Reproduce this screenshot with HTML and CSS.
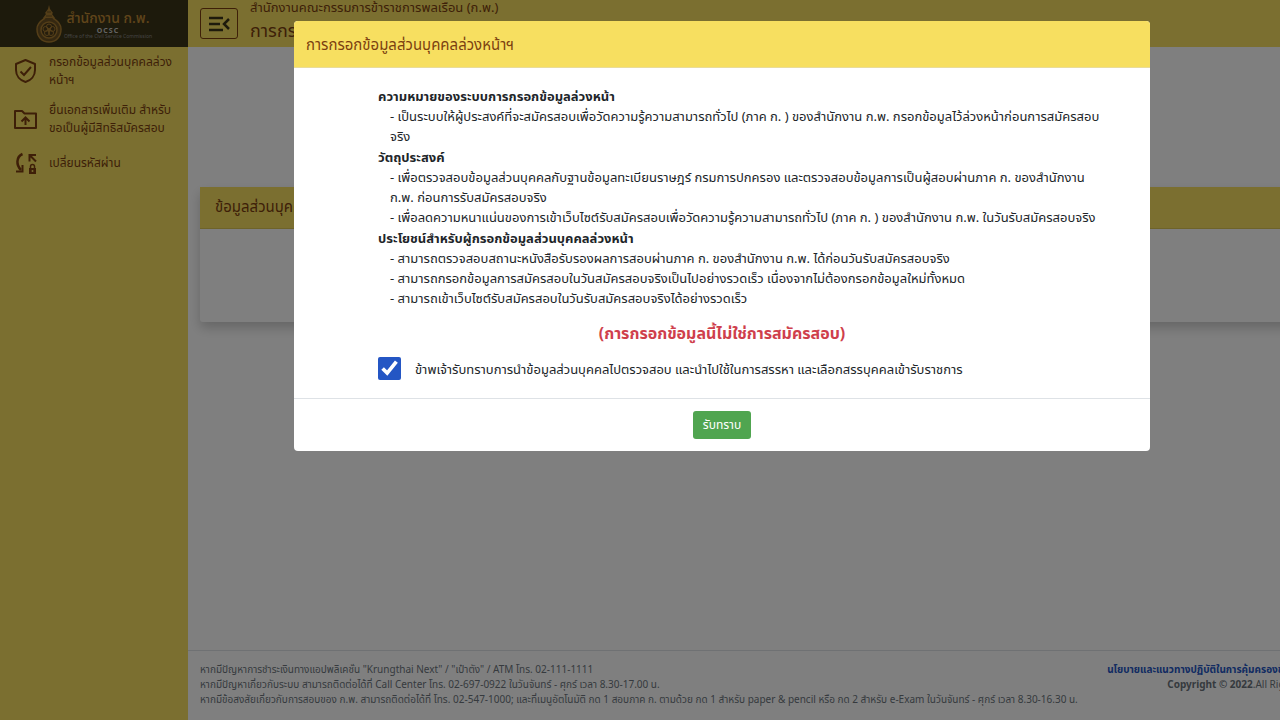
FILE: index.html
```html
<!DOCTYPE html>
<html lang="th">
<head>
    <meta charset="UTF-8">
    <meta name="viewport" content="width=device-width, initial-scale=1.0">
    <title>สำนักงาน ก.พ.</title>
    <link rel="stylesheet" href="styles.css">
</head>
<body>

<div class="page">
    <aside class="sidebar">
        <div class="brand">
            <svg class="brand-logo" width="26" height="38" viewBox="0 0 26 38" fill="none" stroke="#a87c30">
                <path d="M13 0l1 4 3 4-1 1 3 4-2 3H9l-2-3 3-4-1-1 3-4z" fill="#a87c30" stroke="none"/>
                <path d="M11 7h4M10 11h6" stroke="#6b5022"/>
                <path d="M9 13c-2 2-8 4-8 11 0 8 5 13 12 13s12-5 12-13c0-7-6-9-8-11" fill="#6b5022" stroke-width="1.500"/>
                <circle cx="13" cy="25" r="8" fill="#4a3a1a" stroke-width="1.500"/>
                <circle cx="13" cy="21.500" r="2.500"/>
                <circle cx="16.500" cy="24" r="2.500"/>
                <circle cx="15" cy="28" r="2.500"/>
                <circle cx="11" cy="28" r="2.500"/>
                <circle cx="9.500" cy="24" r="2.500"/>
                <circle cx="13" cy="25" r="1.500" fill="#a87c30"/>
            </svg>
            <div class="brand-text">
                <span class="brand-name">สำนักงาน ก.พ.</span>
                <span class="brand-abbr">OCSC</span>
                <span class="brand-sub">Office of the Civil Service Commission</span>
            </div>
        </div>
        <nav class="menu">
            <a class="menu-item" href="#">
                <svg width="26" height="26" viewBox="0 0 26 26" fill="none" stroke="currentColor" stroke-width="2">
                    <path d="M13.500 2L4 6v6c0 6 4 10.500 9.500 12 5.500-1.500 9.500-6 9.500-12V6z" stroke-linejoin="round"/>
                    <path d="M8.500 13.500l3.500 3.500 7-8"/>
                </svg>
                <span>กรอกข้อมูลส่วนบุคคลล่วงหน้าฯ</span>
            </a>
            <a class="menu-item" href="#">
                <svg width="26" height="26" viewBox="0 0 26 26" fill="none" stroke="currentColor" stroke-width="2">
                    <path d="M3 5h7l2.500 2.500H24V22H3z" stroke-linejoin="round"/>
                    <path d="M13.500 19v-7M9.500 15.500l4-4 4 4"/>
                </svg>
                <span>ยื่นเอกสารเพิ่มเติม สำหรับขอเป็นผู้มีสิทธิสมัครสอบ</span>
            </a>
            <a class="menu-item" href="#">
                <svg width="26" height="26" viewBox="0 0 26 26" fill="none" stroke="currentColor" stroke-width="2">
                    <path d="M10.500 4C4 7 4 15 9 20" stroke-width="2.500"/>
                    <path d="M4 21.500h6.500V15M17.500 11.500V5H24M18 5.500l6 6"/>
                    <path d="M17 18h7v6h-7z" fill="currentColor" stroke="none"/>
                    <path d="M18.500 18v-1.500a2 2 0 0 1 4 0V18" stroke-width="1.500"/>
                    <circle cx="20.500" cy="21" r="1" fill="#f7df60" stroke="none"/>
                </svg>
                <span>เปลี่ยนรหัสผ่าน</span>
            </a>
        </nav>
    </aside>

    <div class="main">
        <header class="topbar">
            <button class="toggle" type="button" aria-label="เมนู">
                <svg width="24" height="20" viewBox="0 0 24 20" fill="none" stroke="currentColor" stroke-width="2.500">
                    <path d="M2 4h14M2 10h11M2 16h14M22 5l-5 5 5 5"/>
                </svg>
            </button>
            <div class="titles">
                <div class="org">สำนักงานคณะกรรมการข้าราชการพลเรือน (ก.พ.)</div>
                <h1>การกรอกข้อมูลส่วนบุคคลล่วงหน้าฯ</h1>
            </div>
        </header>

        <main class="content">
            <section class="card">
                <h2 class="card-header">ข้อมูลส่วนบุคคล</h2>
                <div class="card-body"></div>
            </section>
        </main>

        <footer class="footer">
            <div class="contact">
                <div>หากมีปัญหาการชำระเงินทางแอปพลิเคชั่น "Krungthai Next" / "เป๋าตัง" / ATM โทร. 02-111-1111</div>
                <div>หากมีปัญหาเกี่ยวกับระบบ สามารถติดต่อได้ที่ Call Center โทร. 02-697-0922 ในวันจันทร์ - ศุกร์ เวลา 8.30-17.00 น.</div>
                <div>หากมีข้อสงสัยเกี่ยวกับการสอบของ ก.พ. สามารถติดต่อได้ที่ โทร. 02-547-1000; และที่เมนูอัตโนมัติ กด 1 สอบภาค ก. ตามด้วย กด 1 สำหรับ paper &amp; pencil หรือ กด 2 สำหรับ e-Exam ในวันจันทร์ - ศุกร์ เวลา 8.30-16.30 น.</div>
            </div>
            <div class="legal">
                <a href="#">นโยบายและแนวทางปฏิบัติในการคุ้มครองข้อมูลส่วนบุคคล</a>
                <div><b>Copyright © 2022</b>.All Rights Reserved</div>
            </div>
        </footer>
    </div>

    <div class="backdrop">
        <div class="modal" role="dialog" aria-labelledby="modalTitle">
            <h2 class="modal-header" id="modalTitle">การกรอกข้อมูลส่วนบุคคลล่วงหน้าฯ</h2>
            <div class="modal-body">
                <section class="topic">
                    <h3>ความหมายของระบบการกรอกข้อมูลล่วงหน้า</h3>
                    <p>- เป็นระบบให้ผู้ประสงค์ที่จะสมัครสอบเพื่อวัดความรู้ความสามารถทั่วไป (ภาค ก. ) ของสำนักงาน ก.พ. กรอกข้อมูลไว้ล่วงหน้าก่อนการสมัครสอบจริง</p>
                </section>
                <section class="topic">
                    <h3>วัตถุประสงค์</h3>
                    <p>- เพื่อตรวจสอบข้อมูลส่วนบุคคลกับฐานข้อมูลทะเบียนราษฎร์ กรมการปกครอง และตรวจสอบข้อมูลการเป็นผู้สอบผ่านภาค ก. ของสำนักงาน ก.พ. ก่อนการรับสมัครสอบจริง</p>
                    <p>- เพื่อลดความหนาแน่นของการเข้าเว็บไซต์รับสมัครสอบเพื่อวัดความรู้ความสามารถทั่วไป (ภาค ก. ) ของสำนักงาน ก.พ. ในวันรับสมัครสอบจริง</p>
                </section>
                <section class="topic">
                    <h3>ประโยชน์สำหรับผู้กรอกข้อมูลส่วนบุคคลล่วงหน้า</h3>
                    <p>- สามารถตรวจสอบสถานะหนังสือรับรองผลการสอบผ่านภาค ก. ของสำนักงาน ก.พ. ได้ก่อนวันรับสมัครสอบจริง</p>
                    <p>- สามารถกรอกข้อมูลการสมัครสอบในวันสมัครสอบจริงเป็นไปอย่างรวดเร็ว เนื่องจากไม่ต้องกรอกข้อมูลใหม่ทั้งหมด</p>
                    <p>- สามารถเข้าเว็บไซต์รับสมัครสอบในวันรับสมัครสอบจริงได้อย่างรวดเร็ว</p>
                </section>
            </div>
            <p class="notice">(การกรอกข้อมูลนี้ไม่ใช่การสมัครสอบ)</p>
            <div class="accept">
                <input type="checkbox" id="accept" checked>
                <label for="accept">ข้าพเจ้ารับทราบการนำข้อมูลส่วนบุคคลไปตรวจสอบ และนำไปใช้ในการสรรหา และเลือกสรรบุคคลเข้ารับราชการ</label>
            </div>
            <div class="modal-footer">
                <button class="btn" type="button">รับทราบ</button>
            </div>
        </div>
    </div>
</div>

</body>
</html>
```
FILE: styles.css
```css
* {
    box-sizing: border-box;
}
body {
    margin: 0;
    overflow: hidden;
    font-family: "Noto Sans", "Noto Sans Thai", sans-serif;
    font-size: 13px;
    line-height: 20px;
    color: #212529;
}
h1, h2, h3, p {
    margin: 0;
}
.page {
    position: relative;
    display: flex;
    min-width: 1444px;
    min-height: 100vh;
}

/* sidebar */
.sidebar {
    flex: 0 0 188px;
    background-color: #f7df60;
}
.brand {
    display: flex;
    align-items: center;
    justify-content: center;
    gap: 2px;
    height: 47px;
    background-color: #3b3418;
}
.brand-text {
    display: flex;
    flex-direction: column;
    align-items: center;
    white-space: nowrap;
}
.brand-name {
    font-size: 14px;
    line-height: 18px;
    font-weight: 500;
    color: #c08a35;
}
.brand-abbr {
    font-size: 7px;
    line-height: 7px;
    font-weight: 700;
    letter-spacing: 1px;
    color: #c8c8c8;
}
.brand-sub {
    font-size: 5px;
    line-height: 5px;
    color: #8a8a8a;
}
.menu {
    display: flex;
    flex-direction: column;
    gap: 12px;
    padding: 6px 12px;
}
.menu-item {
    display: flex;
    align-items: center;
    gap: 11px;
    min-height: 28px;
    font-size: 12px;
    line-height: 18px;
    color: #7c3f10;
    text-decoration: none;
}
.menu-item svg {
    flex: none;
}

/* header */
.main {
    flex: 1;
    display: flex;
    flex-direction: column;
    background-color: #fff;
}
.topbar {
    display: flex;
    align-items: center;
    gap: 12px;
    height: 47px;
    padding: 0 12px;
    background-color: #f7df60;
    color: #7c3f10;
}
.toggle {
    display: flex;
    align-items: center;
    justify-content: center;
    width: 38px;
    height: 31px;
    padding: 0;
    border: 1px solid #7c3f10;
    border-radius: 3px;
    background: none;
    color: #3c3418;
}
.titles {
    align-self: flex-start;
}
.org {
    line-height: 15px;
}
.titles h1 {
    font-size: 18px;
    line-height: 30px;
    font-weight: 400;
}

/* content */
.content {
    flex: 1;
    padding: 140px 12px 0;
}
.card {
    border-radius: 3px;
    box-shadow: 0 6px 12px rgba(0, 0, 0, 0.2);
}
.card-header {
    padding: 9px 15px 11px;
    border-bottom: 1px solid #dcc655;
    background-color: #f7df60;
    font-size: 15px;
    line-height: 21px;
    font-weight: 400;
    color: #7c3f10;
}
.card-body {
    min-height: 93px;
}

/* footer */
.footer {
    display: flex;
    justify-content: space-between;
    padding: 11px 99px 13px 12px;
    border-top: 1px solid #dee2e6;
    font-size: 10px;
    line-height: 15px;
    color: #6c757d;
    white-space: nowrap;
}
.legal {
    text-align: right;
}
.legal a {
    font-weight: 700;
    color: #2456c4;
    text-decoration: none;
}

/* modal */
.backdrop {
    position: absolute;
    inset: 0;
    padding: 21px 0;
    background-color: rgba(0, 0, 0, 0.5);
}
.modal {
    width: 856px;
    margin: 0 auto;
    border-radius: 4px;
    overflow: hidden;
    background-color: #fff;
}
.modal-header {
    padding: 12px;
    border-bottom: 1px solid #e9dc9a;
    background-color: #f7df60;
    font-size: 15px;
    line-height: 22px;
    font-weight: 400;
    color: #7c3f10;
}
.modal-body {
    padding: 18px 44px 0 84px;
}
.topic {
    margin-bottom: 1px;
}
.topic h3 {
    font-size: 13px;
    font-weight: 700;
}
.topic p {
    padding-left: 12px;
}
.notice {
    padding-top: 12px;
    font-size: 16px;
    line-height: 24px;
    font-weight: 700;
    text-align: center;
    color: #cf3f4c;
}
.accept {
    display: flex;
    align-items: center;
    gap: 14px;
    padding: 12px 12px 18px 84px;
}
.accept input {
    width: 23px;
    height: 23px;
    margin: 0;
    accent-color: #2456c4;
}
.modal-footer {
    padding: 12px;
    border-top: 1px solid #dee2e6;
    text-align: center;
}
.btn {
    padding: 4px 10px;
    border: 0;
    border-radius: 3px;
    background-color: #50a550;
    font-family: inherit;
    font-size: 12px;
    line-height: 20px;
    color: #fff;
}
```
